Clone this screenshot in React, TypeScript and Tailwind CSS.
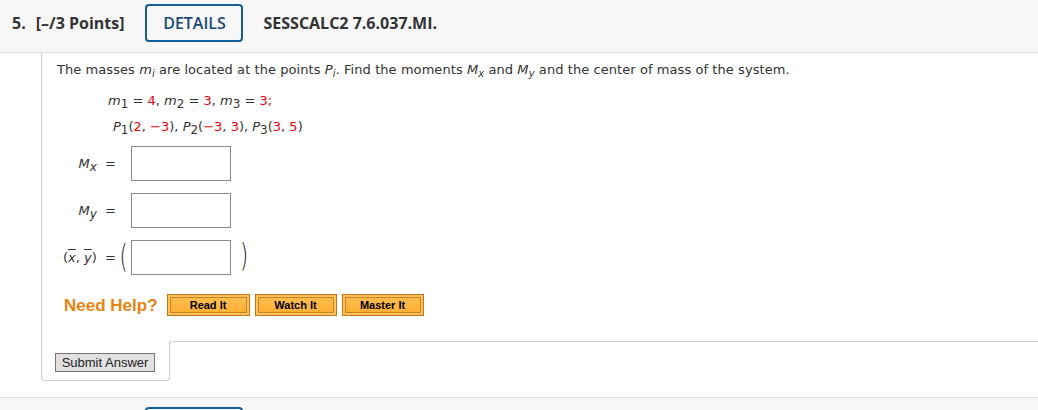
import React from "react";

const R = ({ children }: { children: React.ReactNode }) => (
  <span className="text-[#e8000b]">{children}</span>
);

const OrangeBtn = ({ label, w }: { label: string; w: string }) => (
  <div className={`${w} h-[22px] border border-[#c4731a] bg-[#ffc45e] p-[2px]`}>
    <div className="h-full w-full border border-[#d27f1c] bg-gradient-to-b from-[#ffbd4d] to-[#ffb033] flex items-center justify-center text-[11px] font-bold text-black leading-none [font-family:'Liberation_Sans',Arial,sans-serif]">
      {label}
    </div>
  </div>
);

const Box = () => <div className="w-[100px] h-[35px] border border-[#8a8a8a] bg-white" />;

const Paren = ({ c }: { c: string }) => (
  <span className="inline-block text-[21px] leading-none scale-y-[1.55] [font-family:'DejaVu_Sans',sans-serif] font-extralight text-[#222]">
    {c}
  </span>
);

export default function App() {
  return (
    <div className="w-[1038px] h-[410px] overflow-hidden bg-white text-[#333] [font-family:'DejaVu_Sans',Verdana,sans-serif]">
      {/* header */}
      <div className="h-[53px] bg-[#f7f7f7] border-b border-[#dddddd] flex items-center pl-[12px] pb-[7px] [font-family:'Open_Sans',sans-serif] text-[16px] font-bold text-[#333]">
        <span>5.</span>
        <span className="ml-[10px]">[–/3 Points]</span>
        <div className="ml-[21px] w-[98px] h-[38px] border-2 border-[#145e94] rounded-[4px] flex items-center justify-center text-[#1a4a74] font-semibold text-[16px]">
          DETAILS
        </div>
        <span className="ml-[20px]">SESSCALC2 7.6.037.MI.</span>
      </div>

      {/* body */}
      <div className="ml-[41px] border-l border-[#cccccc] pl-[15px] pt-[8px] pb-[25px] text-[13px]">
        <div className="h-[18px] leading-[18px] whitespace-nowrap tracking-[0.07px]">
          The masses <i>m</i>
          <sub className="text-[10px] italic">i</sub> are located at the points <i>P</i>
          <sub className="text-[10px] italic">i</sub>. Find the moments <i>M</i>
          <sub className="text-[10px] italic">x</sub> and <i>M</i>
          <sub className="text-[10px] italic">y</sub> and the center of mass of the system.
        </div>
        <div className="mt-[9px] ml-[51px] h-[26px] flex items-center whitespace-pre">
          <span>
            <i>m</i><sub className="text-[12px]">1</sub> = <R>4</R>, <i>m</i>
            <sub className="text-[12px]">2</sub> = <R>3</R>, <i>m</i>
            <sub className="text-[12px]">3</sub> = <R>3;</R>
          </span>
        </div>
        <div className="ml-[56px] h-[26px] flex items-center whitespace-pre">
          <span>
            <i>P</i><sub className="text-[12px]">1</sub>(<R>2</R>, <R>−3</R>), <i>P</i>
            <sub className="text-[12px]">2</sub>(<R>−3</R>, <R>3</R>), <i>P</i>
            <sub className="text-[12px]">3</sub>(<R>3</R>, <R>5</R>)
          </span>
        </div>

        <div className="mt-[6px] flex flex-col gap-[12px]">
          <div className="flex items-center">
            <div className="w-[59px] text-right whitespace-pre">
              <i>M</i><sub className="text-[12px] italic">x</sub>{"  "}=
            </div>
            <div className="ml-[15px]"><Box /></div>
          </div>
          <div className="flex items-center">
            <div className="w-[59px] text-right whitespace-pre">
              <i>M</i><sub className="text-[12px] italic">y</sub>{"  "}=
            </div>
            <div className="ml-[15px]"><Box /></div>
          </div>
          <div className="flex items-center">
            <div className="w-[59px] text-right whitespace-pre -ml-[4px] pr-[0px] shrink-0" style={{ width: 63 }}>
              (<i className="overline">x</i>, <i className="overline">y</i>){"  "}=
            </div>
            <div className="w-[15px] flex justify-center items-center pb-[2px]">
              <Paren c="(" />
            </div>
            <Box />
            <div className="ml-[9px] pb-[2px]">
              <Paren c=")" />
            </div>
          </div>
        </div>

        <div className="mt-[19px] ml-[7px] flex items-center">
          <span className="text-[17px] font-bold text-[#ea8310] [font-family:'Liberation_Sans',Arial,sans-serif] leading-none">
            Need Help?
          </span>
          <div className="ml-[9px] flex gap-[5px]">
            <OrangeBtn label="Read It" w="w-[83px]" />
            <OrangeBtn label="Watch It" w="w-[82px]" />
            <OrangeBtn label="Master It" w="w-[82px]" />
          </div>
        </div>
      </div>

      {/* submit tab */}
      <div className="flex">
        <div className="ml-[41px] w-[129px] h-[40px] border-l border-r border-b border-[#cccccc] rounded-b-[4px] flex items-center pl-[13px] pt-[3px]">
          <div className="w-[100px] h-[19px] bg-[#e1e1e1] border border-[#767676] flex items-center justify-center text-[13px] text-[#222] [font-family:'Liberation_Sans',Arial,sans-serif] leading-none">
            Submit Answer
          </div>
        </div>
        <div className="flex-1 border-t border-[#cccccc] rounded-tl-[4px]" />
      </div>

      {/* next header */}
      <div className="mt-[16px] h-[20px] bg-[#f7f7f7] border-t border-[#dddddd] pl-[145px] pt-[9px]">
        <div className="w-[98px] h-[38px] border-2 border-[#145e94] rounded-[4px]" />
      </div>
    </div>
  );
}
